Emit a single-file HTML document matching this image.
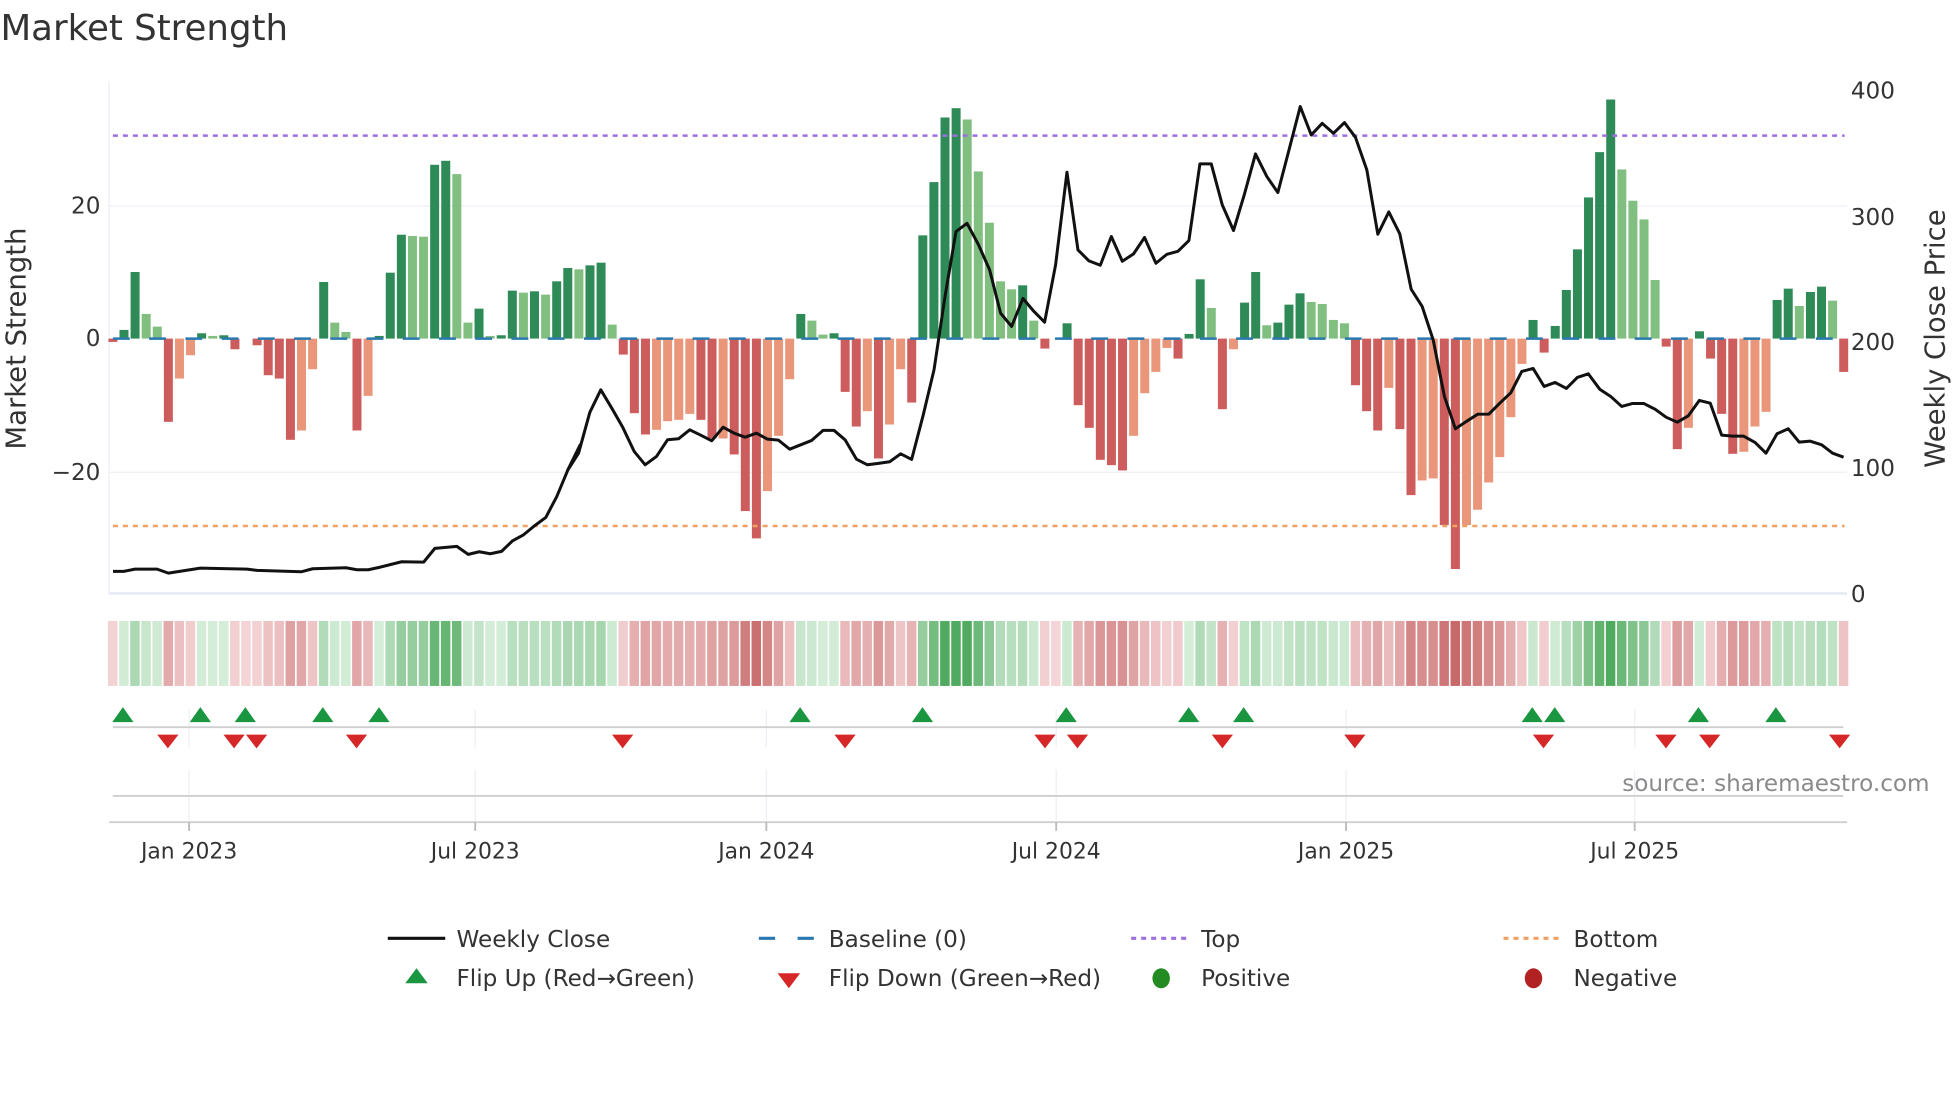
<!DOCTYPE html>
<html><head><meta charset="utf-8">
<style>
html,body{margin:0;padding:0;background:#fff;}
svg{display:block;}
text{font-family:"DejaVu Sans","Liberation Sans",sans-serif;fill:#333;}
</style></head>
<body>
<svg id="c" width="1960" height="1102" viewBox="0 0 1568 882" xmlns="http://www.w3.org/2000/svg">
<rect width="1568" height="882" fill="#fff"/>
<text x="0" y="32" font-size="28.5">Market Strength</text>
<g stroke="#eceff5" stroke-width="1">
<line x1="87" y1="165" x2="1478" y2="165"/>
<line x1="87" y1="378" x2="1478" y2="378"/>
<line x1="87" y1="65" x2="87" y2="475"/>
</g>
<line x1="87" y1="475" x2="1478" y2="475" stroke="#e6e9f2" stroke-width="2"/>
<g id="bars"></g>
<line x1="90" y1="108.5" x2="1476" y2="108.5" stroke="#9d6fe0" stroke-width="2" stroke-dasharray="4 4"/>
<line x1="90" y1="421" x2="1476" y2="421" stroke="#f0a060" stroke-width="2" stroke-dasharray="4 4"/>
<line x1="90" y1="271" x2="1476" y2="271" stroke="#2a78b0" stroke-width="2" stroke-dasharray="13.5 15.5"/>
<polyline id="price" fill="none" stroke="#111" stroke-width="2.4" stroke-linejoin="round"/>
<g font-size="18.5" text-anchor="end">
<text x="80" y="171">20</text>
<text x="80" y="277">0</text>
<text x="80" y="384">−20</text>
</g>
<g font-size="18.5">
<text x="1481" y="79">400</text>
<text x="1481" y="180">300</text>
<text x="1481" y="280">200</text>
<text x="1481" y="381">100</text>
<text x="1481" y="482">0</text>
</g>
<text transform="translate(20,271) rotate(-90)" font-size="22" text-anchor="middle">Market Strength</text>
<text transform="translate(1556,271) rotate(-90)" font-size="22" text-anchor="middle">Weekly Close Price</text>
<g id="heat"></g>
<g id="vgrid" stroke="#eceff5" stroke-width="1"></g>
<line x1="90" y1="582" x2="1475" y2="582" stroke="#cfcfcf" stroke-width="1.5"/>
<g id="flips"></g>
<line x1="90" y1="637" x2="1475" y2="637" stroke="#cfcfcf" stroke-width="1.5"/>
<line x1="87" y1="658" x2="1478" y2="658" stroke="#cfcfcf" stroke-width="1.5"/>
<g id="ticks" stroke="#bbb" stroke-width="1.5"></g>
<g font-size="17.5" text-anchor="middle">
<text x="151" y="687">Jan 2023</text>
<text x="380" y="687">Jul 2023</text>
<text x="613" y="687">Jan 2024</text>
<text x="845" y="687">Jul 2024</text>
<text x="1077" y="687">Jan 2025</text>
<text x="1308" y="687">Jul 2025</text>
</g>
<text x="1544" y="633" font-size="18.5" text-anchor="end" style="fill:#8a8a8a">source: sharemaestro.com</text>
<g font-size="18.5">
<line x1="310" y1="751" x2="356" y2="751" stroke="#111" stroke-width="2.5"/>
<text x="365" y="758">Weekly Close</text>
<line x1="607" y1="751" x2="653" y2="751" stroke="#2a78b0" stroke-width="2.5" stroke-dasharray="13 18"/>
<text x="663" y="758">Baseline (0)</text>
<line x1="905" y1="751" x2="951" y2="751" stroke="#9d6fe0" stroke-width="2.5" stroke-dasharray="4 4"/>
<text x="961" y="758">Top</text>
<line x1="1203" y1="751" x2="1249" y2="751" stroke="#f0a060" stroke-width="2.5" stroke-dasharray="4 4"/>
<text x="1259" y="758">Bottom</text>
<polygon points="333,775 342,787 324,787" fill="#1a9641"/>
<text x="365" y="789">Flip Up (Red→Green)</text>
<polygon points="622,779 640,779 631,791" fill="#d62728"/>
<text x="663" y="789">Flip Down (Green→Red)</text>
<ellipse cx="929" cy="783" rx="7" ry="8" fill="#228b22"/>
<text x="961" y="789">Positive</text>
<ellipse cx="1227" cy="783" rx="7" ry="8" fill="#b22222"/>
<text x="1259" y="789">Negative</text>
</g>
</svg>
<script>
var NS="http://www.w3.org/2000/svg";
function el(t,a,p){var e=document.createElementNS(NS,t);for(var k in a)e.setAttribute(k,a[k]);p.appendChild(e);return e;}
var v=[-0.5,1.3,10,3.7,1.8,-12.5,-6,-2.5,0.8,0.4,0.5,-1.6,0,-1,-5.5,-6,-15.2,-13.8,-4.6,8.5,2.4,1,-13.8,-8.6,0.4,9.9,15.6,15.4,15.3,26.1,26.7,24.7,2.4,4.5,0.4,0.5,7.2,6.9,7.1,6.6,8.6,10.6,10.4,
11,11.4,2.1,-2.4,-11.2,-14.4,-13.7,-12.4,-12.2,-11.3,-12.2,-15,-15,-17.4,-25.9,-30,-22.9,-14.6,-6.1,3.7,2.7,0.6,0.8,-8,-13.2,-10.9,-18,-12.9,-4.6,-9.6,15.5,23.5,33.2,34.6,32.9,25.1,17.4,8.6,7.4,8,2.7,
-1.5,0,2.3,-10,-13.4,-18.2,-19,-19.8,-14.6,-8.2,-5,-1.4,-3,0.7,8.9,4.6,-10.6,-1.6,5.4,10,2,2.4,5.1,6.8,5.5,5.2,2.8,2.3,-7,-10.9,-13.8,-7.4,-13.6,-23.5,-21.3,-21,-28,-34.6,-28,-25.7,-21.6,-17.8,
-11.8,-3.8,2.8,-2.1,1.9,7.3,13.4,21.2,28,35.9,25.4,20.7,17.9,8.8,-1.2,-16.6,-13.4,1.1,-3,-11.3,-17.3,-17,-13.2,-11,5.8,7.5,4.9,7,7.8,5.7,-5];
var bars=document.getElementById('bars'),heat=document.getElementById('heat');
var U=5.33,Z=271,S=8.88;
function mix(a,b,t){return 'rgb('+[0,1,2].map(function(i){return Math.round(a[i]+(b[i]-a[i])*t)}).join(',')+')';}
for(var i=0;i<v.length;i++){
 var x=90+i*S,val=v[i],prev=i?v[i-1]:0,col;
 if(val>=0) col=(val>prev)?'#2e8b57':'#80bf80'; else col=(val<prev)?'#cd5c5c':'#e9967a';
 if(Math.abs(val)>0.05){
  var h=Math.abs(val)*U;
  el('rect',{x:x-3.6,y:val>0?Z-h:Z,width:7.2,height:h,fill:col},bars);
 }
 var t=Math.min(Math.abs(val)/32,1);
 var hc= val>0? mix([214,238,218],[80,170,95],t) : mix([244,212,214],[200,105,105],t);
 el('rect',{x:x-3.9,y:497,width:7.6,height:52,fill:hc},heat);
}
var segs=[[100,[[38,1475],[70,1475],[104,1468],[170,1468],[204,1480],[300,1465],[440,1468],[470,1472],[604,1476],[637,1467],[737,1464],[770,1470],[804,1470],[837,1463],[904,1446],[970,1447],[1004,1406],[1070,1400],[1104,1424],[1137,1416],[1170,1422],[1204,1415],[1237,1383],[1270,1365],[1303,1338],[1337,1313],[1370,1250],[1404,1168],[1440,1095]]],
[560,[[22,1172],[55,1120],[89,998],[122,930],[155,985],[188,1043],[222,1115],[255,1155],[289,1130],[322,1080],[355,1077],[389,1050],[422,1066],[455,1083],[489,1042],[522,1060],[555,1072],[589,1060],[622,1078],[655,1081],[689,1108],[722,1095],[755,1082],[789,1052],[822,1052],[855,1080],[889,1138],[922,1155],[955,1151],[989,1146],[1022,1122],[1055,1139],[1089,1008],[1122,870],[1155,650],[1188,455],[1221,430],[1255,494],[1289,570],[1322,700],[1355,740],[1389,656],[1422,695]]],
[1020,[[74,727],[107,555],[141,277],[174,510],[207,543],[241,556],[274,470],[307,544],[341,522],[374,473],[408,550],[441,523],[474,514],[507,482],[540,252],[574,252],[607,375],[641,452],[674,342],[707,222],[741,290],[774,338],[807,212],[841,80],[874,165],[907,130],[941,160],[974,128],[1007,172],[1041,270],[1074,463],[1107,396],[1140,462],[1174,628],[1207,680],[1240,780],[1274,950],[1307,1047],[1340,1025],[1374,1003],[1407,1003]]],
[1480,[[60,970],[93,939],[126,875],[160,866],[193,920],[226,908],[260,926],[293,893],[326,882],[360,928],[393,950],[426,980],[459,971],[492,971],[526,988],[559,1012],[593,1027],[626,1008],[659,962],[692,970],[726,1066],[759,1069],[792,1069],[826,1088],[859,1120],[892,1062],[926,1047],[959,1087],[992,1084],[1026,1095],[1059,1120],[1092,1132]]]];
var pts=[];
segs.forEach(function(s){s[1].forEach(function(p){pts.push(((p[0]/3+s[0])/1.25).toFixed(1)+','+((p[1]/3+80)/1.25).toFixed(1));});});
document.getElementById('price').setAttribute('points',pts.join(' '));
var fl=document.getElementById('flips');
[98,160,196,258,303,640,738,853,951,995,1226,1244,1359,1421].forEach(function(x){el('polygon',{points:(x)+',566 '+(x+8.5)+',578 '+(x-8.5)+',578',fill:'#1a9641'},fl);});
[134,187,205,285,498,676,836,862,978,1084,1235,1333,1368,1472].forEach(function(x){el('polygon',{points:(x-8.5)+',588 '+(x+8.5)+',588 '+x+',599',fill:'#d62728'},fl);});
var vg=document.getElementById('vgrid'),tk=document.getElementById('ticks');
[151,380,613,845,1077,1308].forEach(function(x){
 el('line',{x1:x,y1:568,x2:x,y2:598},vg);
 el('line',{x1:x,y1:616,x2:x,y2:658},vg);
 el('line',{x1:x,y1:658,x2:x,y2:665},tk);
});
</script>
</body></html>
